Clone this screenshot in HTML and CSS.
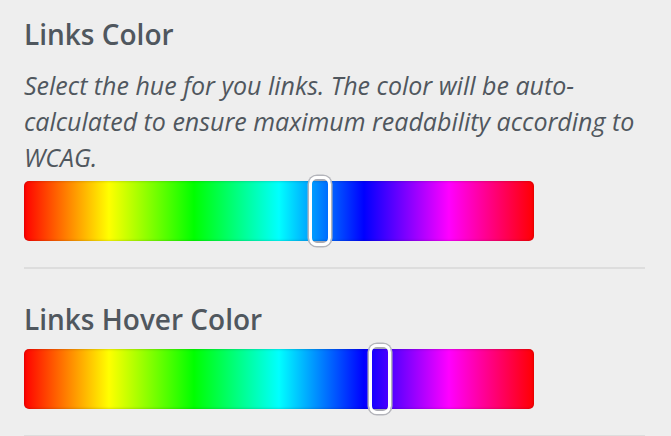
FILE: index.html
```html
<!DOCTYPE html>
<html>
<head>
<meta charset="utf-8">
<link rel="stylesheet" href="styles.css">
</head>
<body>
<ul class="controls">
  <li class="control">
    <h3 class="control-title">Links Color</h3>
    <p class="control-desc">Select the hue for you links. The color will be auto-calculated to ensure maximum readability according to WCAG.</p>
    <div class="hue-bar">
      <span class="hue-handle" style="left: 285px"></span>
    </div>
  </li>
  <li class="control">
    <h3 class="control-title">Links Hover Color</h3>
    <div class="hue-bar">
      <span class="hue-handle" style="left: 345px"></span>
    </div>
  </li>
</ul>
</body>
</html>
```

FILE: styles.css
```css
html, body {
  margin: 0;
  padding: 0;
  background: #eeeeee;
}

body {
  font-family: "Open Sans", "Noto Sans", sans-serif;
  color: #50575e;
}

.controls {
  list-style: none;
  margin: 0;
  padding: 0 26px 0 24px;
}

.control {
  padding: 15px 0 26px;
  border-bottom: 2px solid #dddddd;
}

.control + .control {
  padding-top: 31px;
}

.control-title {
  margin: 0 0 14px;
  font-size: 28px;
  line-height: 38px;
  font-weight: 600;
}

.control + .control .control-title {
  margin-bottom: 11px;
}

.control-desc {
  margin: 0 0 6px;
  font-size: 25px;
  font-style: italic;
  line-height: 36px;
}

.hue-bar {
  position: relative;
  width: 510px;
  height: 60px;
  border-radius: 5px;
  background: linear-gradient(to right, #ff0000 0%, #ffff00 16.667%, #00ff00 33.333%, #00ffff 50%, #0000ff 66.667%, #ff00ff 83.333%, #ff0000 100%);
  box-shadow: inset 0 0 3px rgba(0, 0, 0, 0.25);
}

.hue-handle {
  position: absolute;
  top: -5px;
  width: 16px;
  height: 64px;
  border: 3px solid #ffffff;
  border-radius: 8px;
  background: linear-gradient(to bottom, #a9aab2 0, #a9aab2 2px, transparent 2px, transparent 62px, #a9aab2 62px);
  box-shadow: 0 0 0 1.5px #b4b5bb;
}
```
